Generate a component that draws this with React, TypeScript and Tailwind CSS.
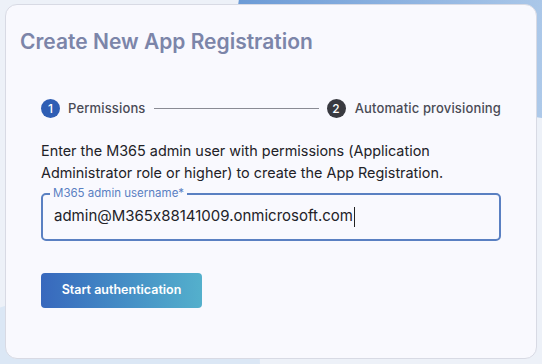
export default function App() {
  return (
    <div
      className="relative h-[364px] w-[542px] overflow-hidden bg-[#edf1f8] [font-feature-settings:'calt'_0]"
      style={{ fontFamily: "Inter, 'Noto Sans', sans-serif" }}
    >
      {/* background decoration */}
      <div className="absolute -right-[60px] -top-[120px] h-[220px] w-[360px] rotate-[8deg] rounded-[40px] bg-gradient-to-r from-[#6c9bd6] to-[#b7d0ec]" />
      <div className="absolute -bottom-[60px] -left-[40px] h-[120px] w-[300px] rounded-full bg-[#dbe7f5]" />

      <div className="relative ml-[5px] mt-[4px] h-[355px] w-[532px] rounded-[12px] border border-[#d8dae4] bg-[#f9f9fe]">
        <h1 className="pl-[14px] pt-[23px] text-[21px] font-semibold leading-[28px] text-[#7c85a9]">
          Create New App Registration
        </h1>

        <div className="px-[35px]">
          {/* stepper */}
          <div className="mt-[43px] flex items-center tracking-[0.15px]">
            <div className="flex h-[19px] w-[19px] items-center justify-center rounded-full bg-[#2f5eb4] text-[12px] font-medium text-white">
              1
            </div>
            <span className="ml-[8px] text-[13px] font-medium text-[#4a4b55]">Permissions</span>
            <div className="mx-[8px] h-px flex-1 bg-[#8a8b94]" />
            <div className="flex h-[19px] w-[19px] items-center justify-center rounded-full bg-[#393a40] text-[12px] font-medium text-white">
              2
            </div>
            <span className="ml-[9px] text-[13px] font-medium text-[#4a4b55]">Automatic provisioning</span>
          </div>

          <p className="mt-[21px] text-[14.4px] leading-[22px] text-[#222228]">
            Enter the M365 admin user with permissions (Application Administrator role or higher) to create the App
            Registration.
          </p>

          {/* input */}
          <div className="relative mt-[9px] h-[48px] w-[460px] rounded-[5px] border-2 border-[#5a80c2]">
            <span className="absolute -top-[9px] left-[7px] bg-[#f9f9fe] px-[3px] text-[11.5px] leading-[14px] text-[#5a80c2]">
              M365 admin username*
            </span>
            <div className="flex h-full items-center pl-[11px] text-[15px] text-[#222228]">
              admin@M365x88141009.onmicrosoft.com
              <span className="ml-[1px] h-[20px] w-px bg-[#222]" />
            </div>
          </div>

          <button className="mt-[32px] flex h-[35px] w-[161px] items-center justify-center rounded-[4px] bg-gradient-to-r from-[#3868bd] to-[#54b0cc] text-[12.5px] font-semibold text-white">
            Start authentication
          </button>
        </div>
      </div>
    </div>
  );
}
